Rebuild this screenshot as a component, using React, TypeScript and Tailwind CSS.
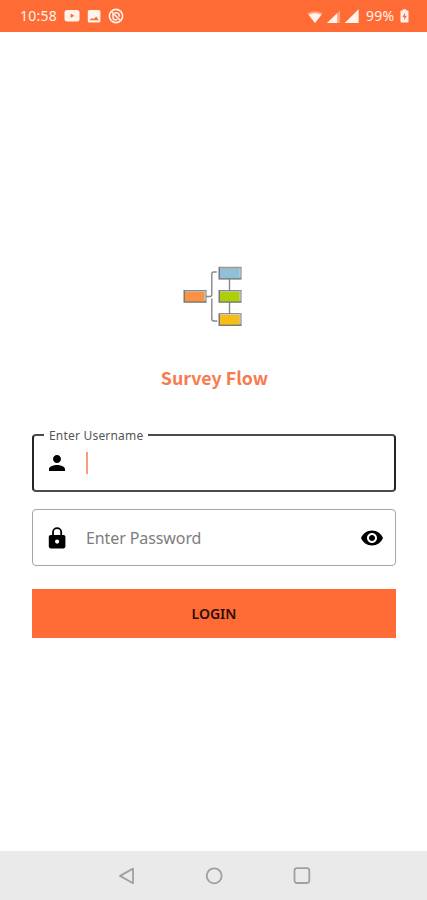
import { MdPerson, MdVisibility } from "react-icons/md";

function StatusBar() {
  return (
    <header className="flex h-8 items-center bg-[#ff6b35] pl-5 text-[#fff3ec]">
      <span className="w-[37px] whitespace-nowrap text-[14px] leading-none tracking-[0.25px]">10:58</span>
      <svg className="ml-[7px] h-4 w-4" viewBox="0 0 16 16" fill="none">
        <rect x="0.5" y="2" width="15" height="11.6" rx="2.5" fill="currentColor" />
        <path d="M6.6 5.5v4.6l3.8-2.3z" fill="#ff6b35" />
      </svg>
      <svg className="ml-[7px] h-4 w-4" viewBox="0 0 16 16" fill="none">
        <rect x="0.8" y="2" width="12.6" height="12.4" rx="1.5" fill="currentColor" />
        <path d="M2.6 12.2l2.3-2.2 1.7 1.1 2.7-2.6 2.4 3.7z" fill="#ff6b35" />
      </svg>
      <svg className="ml-[5px] h-4 w-4" viewBox="0 0 16 16" fill="none" stroke="currentColor">
        <circle cx="8" cy="8" r="6.6" strokeWidth="1.6" />
        <path d="M5 6v3.2A2.4 2.4 0 0 0 9.2 11M6.5 4.8h2a2.8 2.8 0 0 1 2.6 3.8" strokeWidth="1.6" />
        <path d="M3.5 3.5l9 9" strokeWidth="1.5" />
      </svg>

      <div className="ml-auto flex items-center pr-[18px]">
        <svg className="h-4 w-[16px]" viewBox="0 0 16 16" fill="currentColor">
          <path d="M0.3 5.5C4.6 2.5 11.4 2.5 15.7 5.5L8 15z" opacity="0.4" />
          <path d="M1.6 6.8C5.3 4.6 10.7 4.6 14.4 6.8L8 15z" />
        </svg>
        <svg className="ml-[4px] h-4 w-[14px]" viewBox="0 0 14 16" fill="currentColor">
          <path d="M0 15L13 2.5V15z" opacity="0.4" />
          <path d="M0 15L10.2 5.2V15z" />
        </svg>
        <svg className="ml-[3px] h-4 w-[15px]" viewBox="0 0 15 16" fill="currentColor">
          <path d="M0.7 15L14.6 1.2V15z" />
        </svg>
        <span className="ml-[7px] w-[30px] whitespace-nowrap text-[14px] leading-none tracking-[0.2px]">99%</span>
        <svg className="ml-[4px] h-4 w-[9px]" viewBox="0 0 9 16" fill="none">
          <path
            d="M2.8 1.3h3.4v1.2h1.3a1 1 0 0 1 1 1v10.1a1 1 0 0 1-1 1h-6a1 1 0 0 1-1-1V3.5a1 1 0 0 1 1-1h1.3z"
            fill="currentColor"
          />
          <path d="M5.2 4.6L2.4 9h1.8v3.2L6.8 7.7H5z" fill="#ff6b35" />
        </svg>
      </div>
    </header>
  );
}

const nodes = [
  { x: 0, y: 24, fill: "#fb9143" },
  { x: 35, y: 0.8, fill: "#8fc0d8" },
  { x: 35, y: 24, fill: "#abd006" },
  { x: 35, y: 47.2, fill: "#f7bd14" },
];

function Logo() {
  return (
    <svg className="mr-[2px] h-[62px] w-[60px]" viewBox="0 0 60 62" fill="none">
      <path
        d="M23 30.5h4q1.8 0 1.8-2V8q0-2 2-2h3M28.8 32.5v20q0 2.5 2 2.5h3.5M46.5 12v12M46.5 36v12"
        stroke="#88888c"
        strokeWidth="1.4"
      />
      {nodes.map((n) => (
        <g key={n.fill}>
          <rect x={n.x + 0.5} y={n.y} width="23" height="12.8" fill="#777b75" />
          <rect x={n.x + 2} y={n.y + 1.8} width="19.5" height="9.6" fill={n.fill} />
          <path d={`M${n.x + 2} ${n.y + 1.3}h20.5`} stroke="#c8cbc8" />
          <path d={`M${n.x + 22} ${n.y + 1.5}v9.5`} stroke="#ececdc" />
        </g>
      ))}
    </svg>
  );
}

function LockIcon() {
  return (
    <svg className="h-6 w-6 text-black" viewBox="0 0 24 24">
      <rect x="3.8" y="9" width="16.6" height="13.4" rx="1.8" fill="currentColor" />
      <path d="M8 10V6.2a4.1 4.1 0 0 1 8.2 0V10" fill="none" stroke="currentColor" strokeWidth="1.8" />
      <circle cx="12.1" cy="15.6" r="2.1" fill="white" />
    </svg>
  );
}

function NavBar() {
  return (
    <nav className="flex h-[49px] items-center justify-center gap-[68px] bg-[#eaeaea] text-[#a0a0a0]">
      <svg className="h-5 w-5" viewBox="0 0 20 20" fill="none" stroke="currentColor" strokeWidth="1.8">
        <path d="M17 2.6v14.6L4 9.9z" strokeLinejoin="round" />
      </svg>
      <svg className="h-5 w-5" viewBox="0 0 20 20" fill="none" stroke="currentColor" strokeWidth="1.8">
        <circle cx="10.2" cy="9.8" r="7.5" />
      </svg>
      <svg className="h-5 w-5" viewBox="0 0 20 20" fill="none" stroke="currentColor" strokeWidth="1.8">
        <rect x="2.5" y="2.2" width="14.8" height="14.8" rx="2.4" />
      </svg>
    </nav>
  );
}

export default function App() {
  return (
    <div className="flex h-[900px] w-full flex-col overflow-hidden bg-white font-['Noto_Sans',sans-serif]">
      <StatusBar />
      <main className="flex flex-1 flex-col px-8 pt-[234px]">
        <div className="flex justify-center">
          <Logo />
        </div>
        <h1 className="mt-[37px] pl-[2px] text-center font-['Noto_Sans_CJK_SC','Noto_Sans',sans-serif] text-[17.8px] font-bold leading-6 text-[#f87b50]">
          Survey Flow
        </h1>

        <div className="relative mt-[45px] flex h-[58px] w-[364px] items-center rounded-[4px] border-2 border-x-[#242424] border-y-[#4c4c4c] pl-[11px]">
          <label
            htmlFor="username"
            className="absolute -top-[8px] left-[10px] bg-white px-[5px] text-[12px] leading-4 tracking-[0.2px] text-[#555]"
          >
            Enter Username
          </label>
          <MdPerson className="h-[24px] w-[24px] text-black" />
          <span className="ml-[17px] h-[22px] w-[2px] bg-[#f99c7c]" />
          <input id="username" className="min-w-0 flex-1 outline-none" />
        </div>

        <div className="mt-[17px] flex h-[57px] w-[364px] items-center rounded-[4px] border border-[#a5a5a5] pl-[12px] pr-[11px]">
          <LockIcon />
          <input
            type="password"
            placeholder="Enter Password"
            className="ml-[17px] min-w-0 flex-1 text-[16px] tracking-[-0.1px] outline-none placeholder:text-[#7d7d7d]"
          />
          <MdVisibility className="h-[24px] w-[24px] text-black" />
        </div>

        <button className="mt-[23px] h-[49px] w-[364px] bg-[#ff6b35] text-[14px] font-semibold text-[#2b1008]">
          LOGIN
        </button>
      </main>
      <NavBar />
    </div>
  );
}
